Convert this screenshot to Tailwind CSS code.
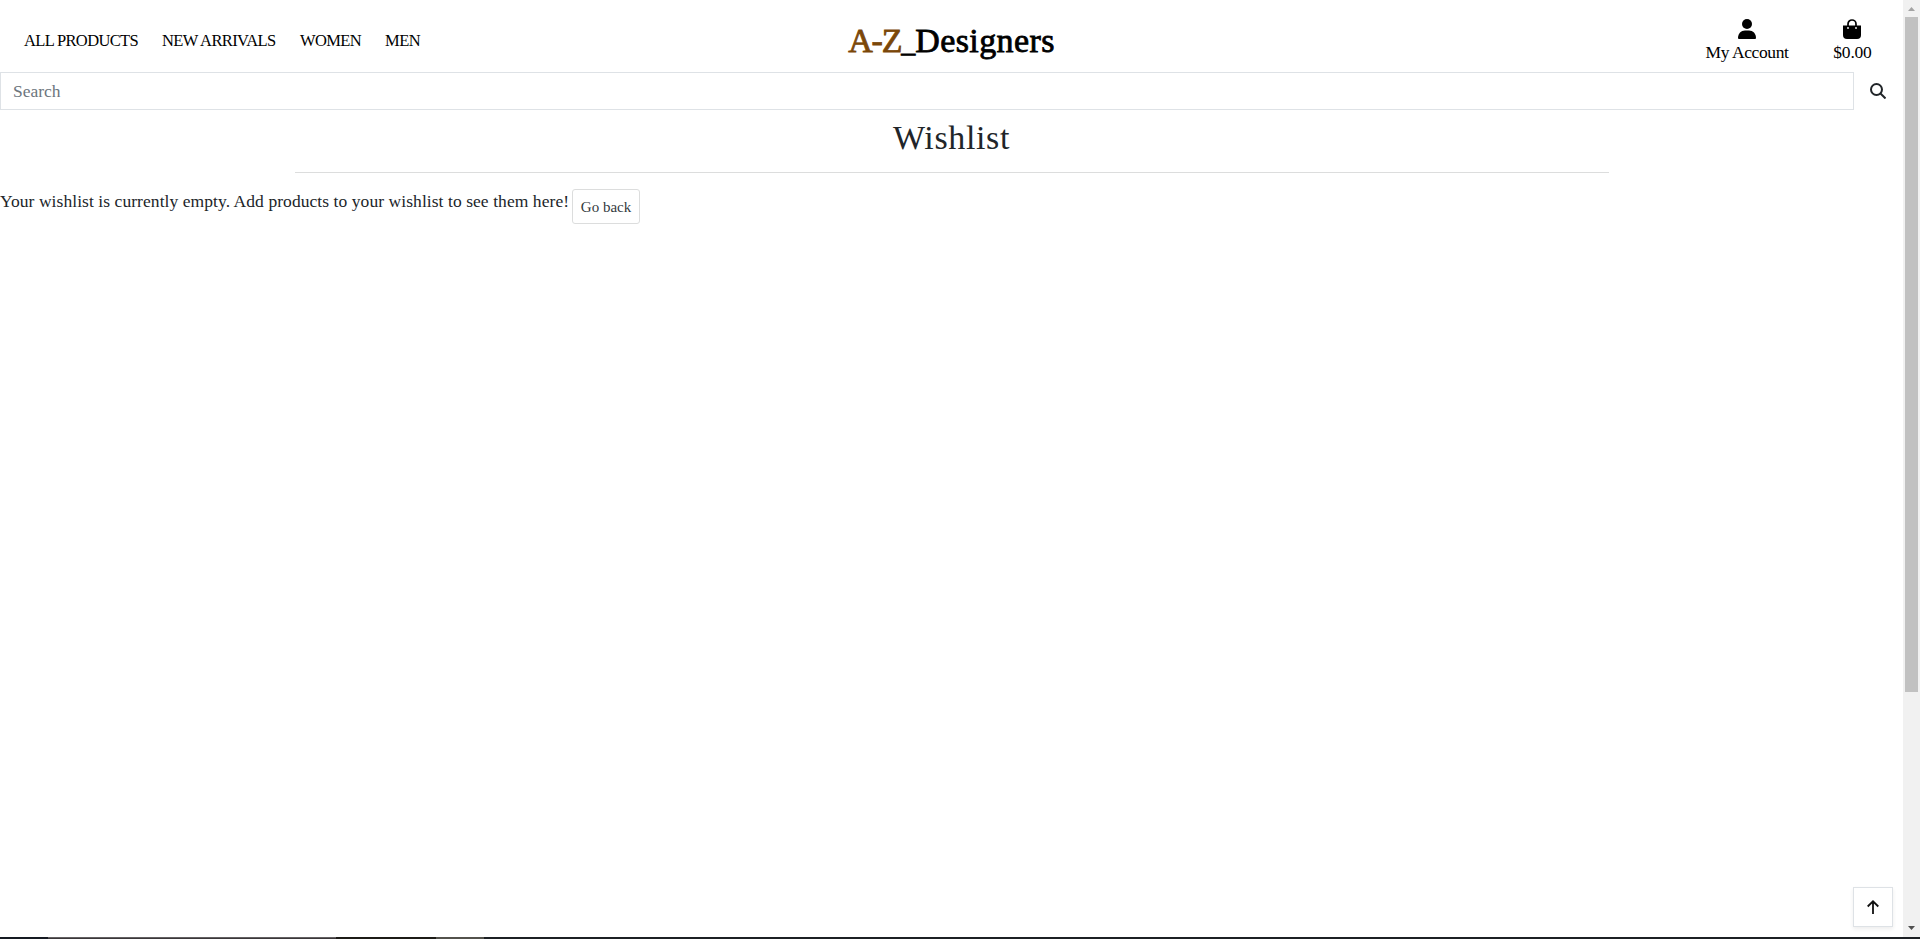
<!DOCTYPE html>
<html lang="en">
<head>
<meta charset="utf-8">
<title>Wishlist</title>
<script src="https://cdn.jsdelivr.net/npm/@tailwindcss/browser@4"></script>
</head>
<body class="h-[939px] overflow-hidden bg-white font-['Liberation_Serif',serif] text-[17.5px] leading-6 text-[#212529]">
<div class="flex h-[937px]">
  <div class="relative flex min-w-0 flex-1 flex-col">
    <header class="grid h-[72px] grid-cols-3 items-center whitespace-nowrap text-black">
      <nav class="flex gap-6 pt-[9px] pl-6 text-[16.5px] tracking-[-0.65px]">
        <a class="w-[114px]">ALL PRODUCTS</a>
        <a class="w-[114px] tracking-[-0.6px]">NEW ARRIVALS</a>
        <a class="w-[61px]">WOMEN</a>
        <a class="w-[36px] tracking-[-0.5px]">MEN</a>
      </nav>
      <div class="pt-[11px] text-center text-[34px] leading-[40px] tracking-[0.4px] [-webkit-text-stroke:0.8px]"><span class="tracking-[-1.2px] text-[#7b4708]">A-Z</span><span class="text-[28px] tracking-normal">_</span>Designers</div>
      <div class="flex justify-end gap-[44px] pt-[10px] pr-[31px]">
        <a class="flex w-[84px] flex-col items-center">
          <svg class="mb-px h-5 w-[18px]" viewBox="0 0 18 20"><circle cx="9" cy="5" r="5"/><path d="M0 19c0-4.500 3-7.500 7-7.500h4c4 0 7 3 7 7.500q0 1-1 1H1q-1 0-1-1z"/></svg>
          <span class="tracking-[-0.4px]">My Account</span>
        </a>
        <a class="flex w-[39px] flex-col items-center">
          <svg class="mb-px h-5 w-[18px]" viewBox="0 0 18 20"><path d="M5 9V5a4 4 0 0 1 8 0v4" fill="none" stroke="#000" stroke-width="1.700"/><path d="M0 6.500h18V16q0 4-4 4H4q-4 0-4-4z"/><circle cx="5" cy="9" r=".9" fill="#fff"/><circle cx="13" cy="9" r=".9" fill="#fff"/></svg>
          <span class="tracking-[-0.2px]">$0.00</span>
        </a>
      </div>
    </header>
    <form class="flex h-[38px]">
      <div class="flex w-[1854px] items-center border border-[#dee2e6] pl-3 text-[#6c757d]">Search</div>
      <div class="flex flex-1 items-center justify-center pr-0.5"><svg class="size-4" viewBox="0 0 16 16" fill="none" stroke="#212529" stroke-width="2"><circle cx="6.500" cy="6.500" r="5.500"/><path d="m10.500 10.500 5 5"/></svg></div>
    </form>
    <main>
      <h2 class="h-[62px] pt-2 text-center text-[34px] leading-[40px] tracking-[0.65px]">Wishlist</h2>
      <hr class="mx-auto w-[1314px] border-t border-[#dcdddd]">
      <div class="flex pt-4 whitespace-nowrap">
        <p class="w-[572px] tracking-[0.065px]">Your wishlist is currently empty. Add products to your wishlist to see them here!</p>
        <button class="h-[35px] w-[68px] rounded-[3px] border border-[#dcdddd] text-[15px] text-[#343a40]">Go back</button>
      </div>
    </main>
    <button class="absolute right-[10px] bottom-[10px] flex size-10 items-center justify-center border border-[#dee2e6] bg-white shadow-[0_2px_4px_rgba(0,0,0,0.075)]">
      <svg class="h-[14px] w-3" viewBox="0 0 12 14" fill="none" stroke="#111" stroke-width="1.800"><path d="M6 14V1.500M.7 6.500 6 1.300l5.300 5.200"/></svg>
    </button>
  </div>
  <div class="flex w-[17px] flex-col items-center bg-[#f1f1f1]">
    <svg class="h-[17px] w-[17px] shrink-0" viewBox="0 0 17 17"><path d="M5 11h7L8.500 7z" fill="#a3a3a3"/></svg>
    <div class="h-[675px] w-[13px] bg-[#c1c1c1]"></div>
    <div class="flex-1"></div>
    <svg class="h-[17px] w-[17px] shrink-0" viewBox="0 0 17 17"><path d="M5 6h7l-3.500 4z" fill="#505050"/></svg>
  </div>
</div>
<div class="flex h-[2px] bg-[#1c2024]">
  <div class="w-12 bg-[#151a22]"></div><div class="w-[288px] border-t border-[#636062] bg-[#3b373a]"></div><div class="w-[100px] bg-[#1c1b17]"></div><div class="w-12 bg-[#53524c]"></div>
</div>
</body>
</html>
